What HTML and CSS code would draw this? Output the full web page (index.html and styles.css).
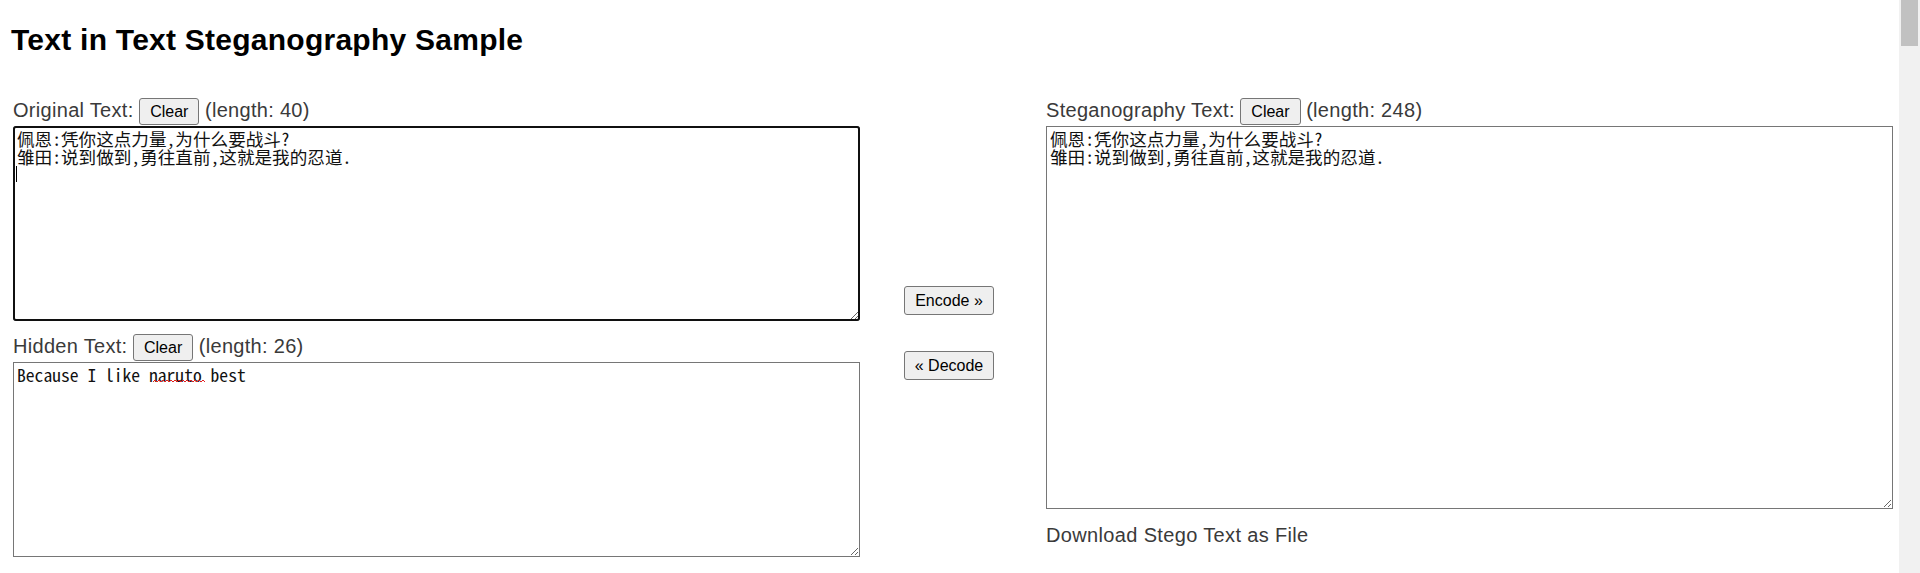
FILE: index.html
```html
<!DOCTYPE html>
<html lang="en">
<head>
<meta charset="utf-8">
<title>Text in Text Steganography Sample</title>
<link rel="stylesheet" href="styles.css">
</head>
<body>
<div class="app">
  <main class="page">
    <h1 class="title">Text in Text Steganography Sample</h1>
    <div class="workspace">
      <section class="col col-left">
        <div class="field-head"><span class="label">Original Text:</span> <button class="btn" type="button">Clear</button> <span class="len">(length: 40)</span></div>
        <div class="area-wrap">
          <textarea class="area area-short area-focused" spellcheck="false">佩恩:凭你这点力量,为什么要战斗?
雏田:说到做到,勇往直前,这就是我的忍道.
</textarea>
          <span class="caret"></span>
        </div>
        <div class="field-head field-head-second"><span class="label">Hidden Text:</span> <button class="btn" type="button">Clear</button> <span class="len">(length: 26)</span></div>
        <div class="area-wrap">
          <textarea class="area area-short" spellcheck="false">Because I like naruto best</textarea>
          <svg class="squiggle" width="52" height="4" viewBox="0 0 52 4"><polyline points="0,3 2,1 4,3 6,1 8,3 10,1 12,3 14,1 16,3 18,1 20,3 22,1 24,3 26,1 28,3 30,1 32,3 34,1 36,3 38,1 40,3 42,1 44,3 46,1 48,3 50,1 52,3" fill="none" stroke="#e02020" stroke-width="1"/></svg>
        </div>
      </section>
      <section class="col col-mid">
        <button class="btn btn-action" type="button">Encode »</button>
        <button class="btn btn-action" type="button">« Decode</button>
      </section>
      <section class="col col-right">
        <div class="field-head"><span class="label">Steganography Text:</span> <button class="btn" type="button">Clear</button> <span class="len">(length: 248)</span></div>
        <textarea class="area area-tall" spellcheck="false">佩恩:凭你这点力量,为什么要战斗?
雏田:说到做到,勇往直前,这就是我的忍道.</textarea>
        <a class="download">Download Stego Text as File</a>
      </section>
    </div>
  </main>
  <div class="scrollbar"><div class="thumb"></div></div>
</div>
</body>
</html>
```

FILE: styles.css
```css
html, body {
  margin: 0;
  padding: 0;
  background: #ffffff;
}

.app {
  display: flex;
  height: 100vh;
  overflow: hidden;
}

.page {
  flex: 1;
  padding: 23px 0 0 11px;
  font-family: "Liberation Sans", Arial, sans-serif;
  color: #3a3a3a;
}

.title {
  margin: 0 0 41px 0;
  font: 700 30px/34px "Liberation Sans", Arial, sans-serif;
  letter-spacing: 0.25px;
  color: #000000;
}

.workspace {
  display: grid;
  grid-template-columns: 847px 186px 847px;
  margin-left: 2px;
  align-items: start;
}

.col {
  display: flex;
  flex-direction: column;
  align-items: stretch;
}

.field-head {
  font-size: 20px;
  line-height: normal;
  white-space: nowrap;
}

.field-head-second {
  margin-top: 13px;
}

.label, .len {
  color: #3a3a3a;
  letter-spacing: 0.3px;
}

.btn {
  display: inline-block;
  font: 16px/19px "Liberation Sans", Arial, sans-serif;
  letter-spacing: 0;
  color: #000000;
  background: #efefef;
  border: 1px solid #767676;
  border-radius: 3px;
  padding: 3px 10px;
  margin: 0;
  vertical-align: baseline;
}

.area-wrap {
  position: relative;
  margin-top: 1px;
}

.area {
  display: block;
  box-sizing: border-box;
  width: 100%;
  margin: 0;
  border: 1px solid #767676;
  border-radius: 0;
  padding: 3px 2px 2px 3px;
  font-family: "Noto Sans Mono CJK SC", "Noto Sans CJK SC", monospace;
  font-size: 17.6px;
  line-height: 17.5px;
  color: #111111;
  background: #ffffff;
  outline: none;
}

.area-short {
  height: 195px;
}

.area-tall {
  height: 383px;
  margin-top: 1px;
}

.area-focused {
  outline: 2px solid #101010;
  outline-offset: -2px;
  border-radius: 3px;
}

.caret {
  position: absolute;
  left: 3px;
  top: 40px;
  width: 1px;
  height: 16px;
  background: #000000;
}

.squiggle {
  position: absolute;
  left: 140px;
  top: 17px;
}

.col-mid {
  align-items: flex-start;
  padding: 188px 0 0 44px;
  gap: 36px;
}

.btn-action {
  width: 90px;
  padding: 4px 0;
  text-align: center;
}

.download {
  margin-top: 15px;
  font-size: 20px;
  line-height: normal;
  letter-spacing: 0.35px;
  color: #3a3a3a;
}

.scrollbar {
  width: 21px;
  flex: none;
  background: #f1f1f1;
  display: flex;
  justify-content: center;
}

.thumb {
  width: 17px;
  height: 46px;
  background: #c1c1c1;
}
```
